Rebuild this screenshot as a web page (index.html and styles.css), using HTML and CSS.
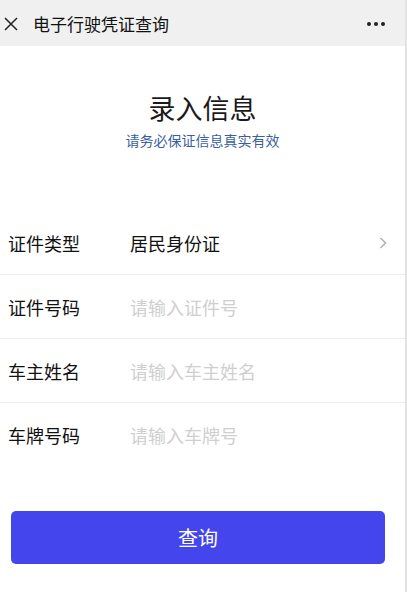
FILE: index.html
```html
<!DOCTYPE html>
<html lang="zh">
<head>
    <meta charset="UTF-8">
    <meta name="viewport" content="width=device-width, initial-scale=1.0">
    <title>电子行驶凭证查询</title>
    <link rel="stylesheet" href="styles.css">
</head>
<body>
    <div class="page">
        <div class="topbar">
            <svg class="close-icon" width="14" height="14" viewBox="0 0 14 14">
                <path d="M1 1 L13 13 M13 1 L1 13" stroke="#222" stroke-width="1.5" fill="none"/>
            </svg>
            <span class="topbar-title">电子行驶凭证查询</span>
            <span class="more">
                <i></i><i></i><i></i>
            </span>
        </div>

        <div class="intro">
            <h2>录入信息</h2>
            <p>请务必保证信息真实有效</p>
        </div>

        <form class="form">
            <div class="row">
                <label>证件类型</label>
                <span class="value">居民身份证</span>
                <svg class="chevron" width="8" height="12" viewBox="0 0 8 12">
                    <path d="M1.5 1 L6.5 6 L1.5 11" stroke="#b5b5b5" stroke-width="1.6" fill="none"/>
                </svg>
            </div>
            <div class="row">
                <label for="idNo">证件号码</label>
                <input type="text" id="idNo" placeholder="请输入证件号">
            </div>
            <div class="row">
                <label for="owner">车主姓名</label>
                <input type="text" id="owner" placeholder="请输入车主姓名">
            </div>
            <div class="row last">
                <label for="plate">车牌号码</label>
                <input type="text" id="plate" placeholder="请输入车牌号">
            </div>

            <div class="buttons">
                <button type="button" class="query-btn">查询</button>
            </div>
        </form>
    </div>
</body>
</html>
```

FILE: styles.css
```css
* {
    box-sizing: border-box;
    margin: 0;
    padding: 0;
    font-family: "Noto Sans CJK SC", "Noto Sans", sans-serif;
}
body {
    background-color: #fff;
    width: 407px;
    height: 592px;
    overflow: hidden;
}
.page {
    height: 592px;
    border-right: 2px solid #e2e2e2;
}
.topbar {
    height: 46px;
    background-color: #f0f0f0;
    display: flex;
    align-items: center;
    padding: 0 20px 0 4px;
}
.close-icon {
    margin-top: 2px;
}
.topbar-title {
    margin-left: 15px;
    font-size: 17px;
    color: #111;
    flex: 1;
}
.more {
    display: flex;
    gap: 3px;
    margin-top: 2px;
}
.more i {
    width: 4px;
    height: 4px;
    border-radius: 50%;
    background-color: #222;
}
.intro {
    text-align: center;
    padding-top: 43px;
    height: 165px;
}
.intro h2 {
    font-size: 27px;
    font-weight: normal;
    color: #1a1a1a;
    line-height: 38px;
}
.intro p {
    font-size: 14px;
    color: #3b5f9e;
    margin-top: 3px;
}
.form {
    display: flex;
    flex-direction: column;
}
.row {
    display: flex;
    align-items: center;
    height: 64px;
    border-bottom: 1px solid #ececec;
    padding: 0 18px 0 8px;
}
.row.last {
    border-bottom: none;
}
.row label {
    width: 122px;
    font-size: 18px;
    color: #111;
}
.row .value {
    flex: 1;
    font-size: 18px;
    color: #111;
}
.row input {
    flex: 1;
    border: none;
    outline: none;
    font-size: 18px;
    background: transparent;
    color: #111;
}
.row input::placeholder {
    color: #cfcfcf;
}
.buttons {
    padding: 44px 20px 0 11px;
}
.query-btn {
    width: 100%;
    height: 53px;
    border: none;
    border-radius: 5px;
    background-color: #4545ee;
    color: #fff;
    font-size: 20px;
    cursor: pointer;
}
```
